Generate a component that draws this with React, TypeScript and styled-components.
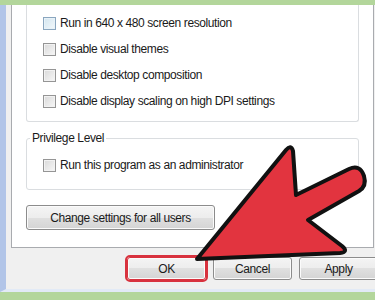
import React from "react";
import styled, { createGlobalStyle } from "styled-components";

const GlobalStyle = createGlobalStyle`
  html, body {
    margin: 0;
    padding: 0;
    overflow: hidden;
    background: #b3d69b;
  }
`;

type Option = {
  label: string;
  hover?: boolean;
};

const displayOptions: Option[] = [
  { label: "Run in 640 x 480 screen resolution", hover: true },
  { label: "Disable visual themes" },
  { label: "Disable desktop composition" },
  { label: "Disable display scaling on high DPI settings" },
];

const CheckRow = ({ label, hover }: Option) => (
  <Row>
    <CheckBox $hover={hover} />
    <Label>{label}</Label>
  </Row>
);

const PointerArrow = () => (
  <ArrowLayer viewBox="0 0 375 300" width="375" height="300">
    <path
      d="M197 259 L286 150 Q291 144 293 151 L296 195 L349 169 Q360 164 364 176 Q367 186 359 191 L308 220 L342 246 Q349 252 340 253 Z"
      fill="#e2343f"
      stroke="#111"
      strokeWidth="4"
      strokeLinejoin="round"
    />
  </ArrowLayer>
);

export default function App() {
  return (
    <>
      <GlobalStyle />
      <Page>
        <Window>
          <TabPanel>
            <GroupBox>
              {displayOptions.map((option) => (
                <CheckRow key={option.label} {...option} />
              ))}
            </GroupBox>
            <Fieldset>
              <Legend>Privilege Level</Legend>
              <CheckRow label="Run this program as an administrator" />
            </Fieldset>
            <WideButton>Change settings for all users</WideButton>
          </TabPanel>
          <ButtonRow>
            <DialogButton $highlighted>OK</DialogButton>
            <DialogButton>Cancel</DialogButton>
            <DialogButton>Apply</DialogButton>
          </ButtonRow>
        </Window>
        <PointerArrow />
      </Page>
    </>
  );
}

const Page = styled.div`
  position: relative;
  width: 375px;
  height: 300px;
  padding-top: 5px;
  box-sizing: border-box;
  overflow: hidden;
  font-family: "Liberation Sans", Arial, sans-serif;
  font-size: 12px;
  letter-spacing: -0.4px;
  color: #1a1a1a;
`;

const Window = styled.div`
  width: 392px;
  height: 287px;
  box-sizing: border-box;
  display: flex;
  flex-direction: column;
  padding: 0 0 0 5px;
  background: #f0f0f0;
  border-left: 6px solid #b2c5e8;
  border-bottom: 3px solid #e2eaf6;
`;

const TabPanel = styled.div`
  width: 363px;
  box-sizing: border-box;
  background: #fff;
  border: 1px solid #a9abaf;
  border-top: none;
  padding: 0 14px 17px;
`;

const GroupBox = styled.div`
  border: 1px solid #dadde0;
  border-top: none;
  border-radius: 0 0 3px 3px;
  padding: 5px 0 7px 16px;
`;

const Fieldset = styled.fieldset`
  margin: 9px 0 0;
  min-width: 0;
  border: 1px solid #dadde0;
  border-radius: 3px;
  padding: 7px 0 11px 16px;
`;

const Legend = styled.legend`
  margin-left: -13px;
  padding: 0 2px;
  line-height: 14px;
`;

const Row = styled.div`
  display: flex;
  align-items: center;
  gap: 4px;
  height: 26px;
`;

const CheckBox = styled.span<{ $hover?: boolean }>`
  width: 13px;
  height: 13px;
  box-sizing: border-box;
  flex: none;
  border: 1px solid ${(p) => (p.$hover ? "#8aa6bf" : "#959595")};
  background: ${(p) =>
    p.$hover
      ? "linear-gradient(135deg, #d3e5ef, #f2f8fb)"
      : "linear-gradient(135deg, #d9d9d9, #f7f7f7)"};
  box-shadow: inset 0 0 0 1px ${(p) => (p.$hover ? "#e8f2f8" : "#f2f2f2")};
`;

const Label = styled.span`
  white-space: nowrap;
  line-height: 14px;
`;

const buttonFace = `
  border: 1px solid #8c8c8c;
  border-radius: 3px;
  background: linear-gradient(#f4f4f4 0%, #ededed 50%, #e0e0e0 50%, #d4d4d4 100%);
  box-shadow: inset 0 0 0 1px #fbfbfb;
  font: inherit;
  letter-spacing: inherit;
  color: #1a1a1a;
  padding: 0;
`;

const WideButton = styled.button`
  ${buttonFace}
  display: block;
  margin-top: 15px;
  width: 189px;
  height: 25px;
`;

const ButtonRow = styled.div`
  display: flex;
  gap: 7px;
  margin-top: 9px;
  padding-left: 116px;
`;

const DialogButton = styled.button<{ $highlighted?: boolean }>`
  ${buttonFace}
  width: 79px;
  height: 23px;
  ${(p) =>
    p.$highlighted &&
    `
    border-color: #d8323e;
    outline: 2px solid #d8323e;
  `}
`;

const ArrowLayer = styled.svg`
  position: absolute;
  left: 0;
  top: 0;
  pointer-events: none;
`;
